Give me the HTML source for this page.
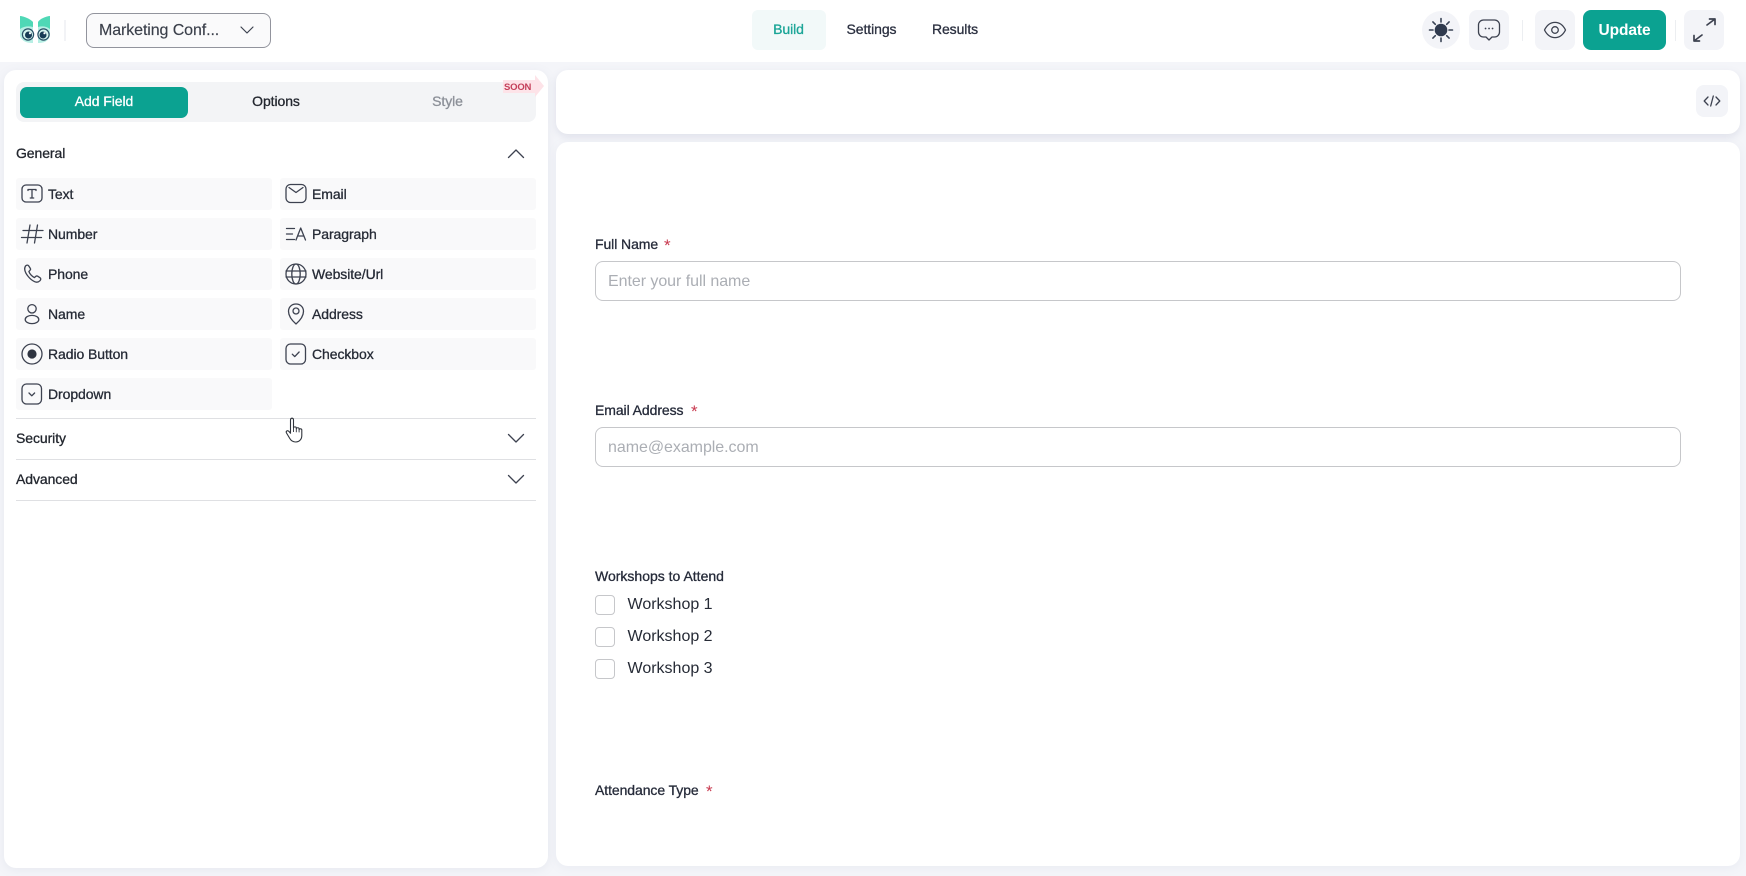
<!DOCTYPE html>
<html lang="en">
<head>
<meta charset="utf-8">
<title>Form Builder</title>
<style>
*{box-sizing:border-box;margin:0;padding:0}
html,body{width:1746px;height:876px;overflow:hidden;background:#f4f5f9;font-family:"Liberation Sans",Arial,sans-serif;color:#262b36}
.a{position:absolute}
.t{position:absolute;white-space:nowrap;line-height:20px;height:20px;font-size:14px;-webkit-text-stroke:.3px currentColor;letter-spacing:-.08px}
.c{transform:translateX(-50%)}
.btn{position:absolute;background:#f3f4f8;border-radius:8px}
.row{position:absolute;height:32px;background:#f9f9fa;border-radius:3px;width:256px}
.div{position:absolute;left:15.5px;width:520px;height:1px;background:#dfe0e3}
.input{position:absolute;left:595px;width:1086px;height:40px;border:1.5px solid #c6c7ca;border-radius:8px;background:#fff}
.ph{position:absolute;font-size:16px;line-height:20px;color:#abaeb4;white-space:nowrap;letter-spacing:-.05px}
.cb{position:absolute;left:595px;width:20px;height:20px;border:1.3px solid #c6c7ca;border-radius:4px;background:#fff}
.wl{position:absolute;left:627.5px;font-size:16px;line-height:20px;color:#262b36;white-space:nowrap}
.star{position:absolute;color:#c8384e;font-size:17px;line-height:20px}
svg{position:absolute;overflow:visible;fill:none}
.i{stroke:#3d4250;stroke-width:1.3;stroke-linecap:round;stroke-linejoin:round}
</style>
</head>
<body>
<!-- header -->
<div class="a" style="left:0;top:0;width:1746px;height:62px;background:#fff"></div>

<svg style="left:0;top:0" width="70" height="60" viewBox="0 0 70 60">
  <path d="M20 16c5 .5 10 3 13 6v21c-5 0-11-1-13-7z" fill="#b7efe4"/>
  <path d="M50 16c-5 .5-10 3-12 6v21c5 0 10-1 12-7z" fill="#b7efe4"/>
  <path d="M20 16c5 .5 10 3 13 6v5c-4-1-9-1-13 2z" fill="#4fd8b6"/>
  <path d="M50 16c-5 .5-10 3-12 6v5c4-1 8-1 12 2z" fill="#4fd8b6"/>
  <circle cx="28" cy="34.5" r="5.6" fill="#d6f6ef" stroke="#2a5066" stroke-width="1.2"/>
  <circle cx="28.5" cy="35" r="3.5" fill="#173b55"/>
  <circle cx="30" cy="33.2" r="1.1" fill="#fff"/>
  <circle cx="43.5" cy="34.5" r="5.6" fill="#d6f6ef" stroke="#2a5066" stroke-width="1.2"/>
  <circle cx="43" cy="35" r="3.5" fill="#173b55"/>
  <circle cx="44.5" cy="33.2" r="1.1" fill="#fff"/>
  <path d="M65 20v21" stroke="#eceef1" stroke-width="1.4"/>
</svg>

<div class="a" style="left:86px;top:12.5px;width:185px;height:35px;border:1.2px solid #92949d;border-radius:8px;background:#fafafb"></div>
<div class="a" style="left:99px;top:20.5px;font-size:16px;line-height:20px;color:#3a3f4a;white-space:nowrap;letter-spacing:-.1px;-webkit-text-stroke:.15px currentColor">Marketing Conf...</div>
<svg style="left:240px;top:25px" width="14" height="10"><path d="M1 2l6 6 6-6" stroke="#3d4250" stroke-width="1.2" stroke-linecap="round" stroke-linejoin="round"/></svg>

<div class="a" style="left:752px;top:10px;width:74px;height:40px;background:#f2f9f9;border-radius:6px"></div>
<div class="t c" style="left:788.5px;top:19px;color:#1aa597">Build</div>
<div class="t c" style="left:871.5px;top:19px;color:#2b3040">Settings</div>
<div class="t c" style="left:955px;top:19px;color:#2b3040">Results</div>

<!-- sun -->
<div class="a" style="left:1422px;top:11px;width:38px;height:38px;border-radius:50%;background:#f3f4f8"></div>
<svg style="left:1421px;top:10px" width="40" height="40" viewBox="0 0 40 40">
  <circle cx="20" cy="20" r="6.3" fill="#2f3a4e"/>
  <path d="M20 8.5v3.5M20 28v3.5M8.5 20h3.5M28 20h3.5M11.9 11.900l2.400 2.400M25.700 25.700l2.400 2.400M28.100 11.900l-2.400 2.400M14.300 25.700l-2.400 2.400" stroke="#3a4456" stroke-width="1.6" stroke-linecap="round"/>
</svg>
<!-- chat -->
<div class="btn" style="left:1469px;top:10px;width:40px;height:40px"></div>
<svg style="left:1469px;top:10px" width="40" height="40" viewBox="0 0 40 40">
  <path d="M14.500 10h11a5 5 0 0 1 5 5v7a5 5 0 0 1-5 5h-2.500l-3 3-3-3h-2.500a5 5 0 0 1-5-5v-7a5 5 0 0 1 5-5z" class="i" stroke-width="1.500"/>
  <path d="M16.500 18.500h.1M20 18.500h.1M23.500 18.500h.1" stroke="#3d4250" stroke-width="1.7" stroke-linecap="round"/>
</svg>
<div class="a" style="left:1521.5px;top:20px;width:1.4px;height:21px;background:#eceef1"></div>
<!-- eye -->
<div class="btn" style="left:1535px;top:10px;width:40px;height:40px"></div>
<svg style="left:1535px;top:10px" width="40" height="40" viewBox="0 0 40 40">
  <path d="M9.500 20c2.500-5 6.200-7.600 10.500-7.600S28 15 30.500 20c-2.500 5-6.200 7.600-10.500 7.600S12 25 9.500 20z" class="i" stroke-width="1.500"/>
  <circle cx="20" cy="20" r="3.300" class="i" stroke-width="1.500"/>
</svg>
<!-- update -->
<div class="a" style="left:1583px;top:10px;width:83px;height:40px;background:#0ba291;border-radius:8px"></div>
<div class="a c" style="left:1624.5px;top:21px;font-size:15.5px;line-height:20px;color:#fff;font-weight:700;white-space:nowrap;letter-spacing:-.1px">Update</div>
<div class="a" style="left:1674.5px;top:20px;width:1.4px;height:21px;background:#eceef1"></div>
<!-- expand -->
<div class="btn" style="left:1684px;top:10px;width:40px;height:40px"></div>
<svg style="left:1684px;top:10px" width="40" height="40" viewBox="0 0 40 40">
  <path d="M23 15l8-6M25.500 9H31v5.500M18 25l-8 6M10 25.500V31h5.500" stroke="#3d4250" stroke-width="1.700" stroke-linecap="round" stroke-linejoin="round"/>
</svg>

<!-- left panel -->
<div class="a" style="left:4px;top:70px;width:543.5px;height:798px;background:#fff;border-radius:12px;box-shadow:0 2px 10px rgba(120,125,160,.10)"></div>
<div class="a" style="left:15.5px;top:82px;width:520px;height:39.5px;background:#f3f4f6;border-radius:8px"></div>
<div class="a" style="left:20px;top:86.5px;width:168px;height:31px;background:#0ba291;border-radius:7px"></div>
<div class="t c" style="left:104px;top:91px;color:#fff">Add Field</div>
<div class="t c" style="left:276px;top:91px;color:#23272f">Options</div>
<div class="t c" style="left:447.5px;top:91px;color:#8c9098">Style</div>
<svg style="left:503px;top:75px" width="40" height="22" viewBox="0 0 40 22"><path d="M0 5h32V0l9 11-9 11v-4H0z" fill="#fde3e8"/></svg>
<div class="a" style="left:504px;top:80.500px;font-size:9.5px;line-height:13px;font-weight:700;color:#c4405a;white-space:nowrap;letter-spacing:-.2px">SOON</div>

<div class="t" style="left:16px;top:143px;color:#23272f">General</div>
<svg style="left:507px;top:148px" width="18" height="11"><path d="M1.500 9.500L9 2l7.500 7.500" stroke="#3d4250" stroke-width="1.300" stroke-linecap="round" stroke-linejoin="round"/></svg>

<div class="row" style="left:15.5px;top:178px"></div><div class="row" style="left:280px;top:178px"></div>
<div class="row" style="left:15.5px;top:218px"></div><div class="row" style="left:280px;top:218px"></div>
<div class="row" style="left:15.5px;top:258px"></div><div class="row" style="left:280px;top:258px"></div>
<div class="row" style="left:15.5px;top:298px"></div><div class="row" style="left:280px;top:298px"></div>
<div class="row" style="left:15.5px;top:338px"></div><div class="row" style="left:280px;top:338px"></div>
<div class="row" style="left:15.5px;top:378px"></div>

<div class="t" style="left:48px;top:184px">Text</div>
<div class="t" style="left:48px;top:224px">Number</div>
<div class="t" style="left:48px;top:264px">Phone</div>
<div class="t" style="left:48px;top:304px">Name</div>
<div class="t" style="left:48px;top:344px">Radio Button</div>
<div class="t" style="left:48px;top:384px">Dropdown</div>
<div class="t" style="left:312px;top:184px">Email</div>
<div class="t" style="left:312px;top:224px">Paragraph</div>
<div class="t" style="left:312px;top:264px">Website/Url</div>
<div class="t" style="left:312px;top:304px">Address</div>
<div class="t" style="left:312px;top:344px">Checkbox</div>

<!-- left icons -->
<svg style="left:20px;top:178px" width="26" height="32" viewBox="0 0 26 32">
  <rect x="2" y="7" width="20" height="17" rx="4" class="i" stroke-width="1.400"/>
  <path d="M8 12.500v-1h8v1M12 11.500v8.500M10.300 20h3.400" class="i" stroke-width="1.200"/>
</svg>
<svg style="left:20px;top:218px" width="26" height="32" viewBox="0 0 26 32">
  <path d="M10 7L7 25M17.500 7l-3 18M3 12.500h20M1.500 19.500h20" class="i" stroke-width="1.200"/>
</svg>
<svg style="left:20px;top:258px" width="26" height="32" viewBox="0 0 26 32">
  <path d="M5.500 8c1.200-1.100 2.500-1.200 3.200-.1l1.600 2.500c.5.700.3 1.400-.4 2l-1 1c.7 2.400 3 5.100 5.600 6.200l1.100-1.100c.6-.6 1.400-.7 2.100-.3l2.400 1.600c.9.600.9 1.800-.1 2.900-1.500 1.500-3.500 1.900-5.600.9C10 21.500 5.500 16 4.800 12c-.3-1.500.1-3 .7-4z" class="i" stroke-width="1.300"/>
</svg>
<svg style="left:20px;top:298px" width="26" height="32" viewBox="0 0 26 32">
  <circle cx="12" cy="10.800" r="4.200" class="i" stroke-width="1.400"/>
  <ellipse cx="12" cy="21.500" rx="6.800" ry="4.100" class="i" stroke-width="1.400"/>
</svg>
<svg style="left:20px;top:338px" width="26" height="32" viewBox="0 0 26 32">
  <circle cx="12" cy="16" r="10" class="i" stroke-width="1.400"/>
  <circle cx="12" cy="16" r="4.600" fill="#2f3440"/>
</svg>
<svg style="left:20px;top:378px" width="26" height="32" viewBox="0 0 26 32">
  <rect x="2" y="6" width="19.500" height="20" rx="4.500" class="i" stroke-width="1.400"/>
  <path d="M9 15l2.800 2.800L14.600 15" class="i" stroke-width="1.300"/>
</svg>

<!-- right icons -->
<svg style="left:284px;top:178px" width="26" height="32" viewBox="0 0 26 32">
  <rect x="2" y="6.500" width="20" height="18" rx="4.500" class="i" stroke-width="1.400"/>
  <path d="M5 9.500l7 5 7-5" class="i" stroke-width="1.300"/>
</svg>
<svg style="left:284px;top:218px" width="26" height="32" viewBox="0 0 26 32">
  <path d="M2.500 10.500h8M2.500 16h6M2.500 21.500h8M12 22l4.700-12 4.800 12M13.600 18h6.200" class="i" stroke-width="1.200"/>
</svg>
<svg style="left:284px;top:258px" width="26" height="32" viewBox="0 0 26 32">
  <circle cx="12" cy="16" r="10" class="i" stroke-width="1.400"/>
  <ellipse cx="12" cy="16" rx="4.200" ry="10" class="i" stroke-width="1.300"/>
  <path d="M2 13h20M2 19h20" class="i" stroke-width="1.300"/>
</svg>
<svg style="left:284px;top:298px" width="26" height="32" viewBox="0 0 26 32">
  <path d="M12 6c4.200 0 7.500 3 7.500 7.300 0 5-3.800 9.500-7.500 12.700-3.700-3.200-7.500-7.700-7.500-12.700C4.500 9 7.800 6 12 6z" class="i" stroke-width="1.400"/>
  <circle cx="12" cy="13" r="3" class="i" stroke-width="1.400"/>
</svg>
<svg style="left:284px;top:338px" width="26" height="32" viewBox="0 0 26 32">
  <rect x="2" y="6" width="19.500" height="20" rx="4.500" class="i" stroke-width="1.400"/>
  <path d="M8.300 16.200l2.500 2.400 4.300-4.600" class="i" stroke-width="1.300"/>
</svg>

<div class="div" style="top:418px"></div>
<div class="t" style="left:16px;top:428px;color:#23272f">Security</div>
<svg style="left:507px;top:433px" width="18" height="11"><path d="M1.500 1.500L9 9l7.500-7.500" stroke="#3d4250" stroke-width="1.300" stroke-linecap="round" stroke-linejoin="round"/></svg>
<div class="div" style="top:459px"></div>
<div class="t" style="left:16px;top:469px;color:#23272f">Advanced</div>
<svg style="left:507px;top:474px" width="18" height="11"><path d="M1.500 1.500L9 9l7.500-7.500" stroke="#3d4250" stroke-width="1.300" stroke-linecap="round" stroke-linejoin="round"/></svg>
<div class="div" style="top:500px"></div>

<!-- top card -->
<div class="a" style="left:556px;top:70px;width:1184px;height:64px;background:#fff;border-radius:12px;box-shadow:0 3px 8px rgba(120,125,160,.16)"></div>
<div class="btn" style="left:1696px;top:85px;width:32px;height:32px"></div>
<svg style="left:1696px;top:85px" width="32" height="32" viewBox="0 0 32 32">
  <path d="M12 12l-3.800 4 3.800 4M20 12l3.800 4-3.800 4M17.300 11l-2.600 10" class="i" stroke-width="1.200"/>
</svg>

<!-- main card -->
<div class="a" style="left:556px;top:142px;width:1184px;height:724px;background:#fff;border-radius:12px;box-shadow:0 2px 10px rgba(120,125,160,.08)"></div>

<div class="t" style="left:595px;top:234px;color:#262b3a">Full Name</div>
<div class="star" style="left:664px;top:236px">*</div>
<div class="input" style="top:261px"></div>
<div class="ph" style="left:608px;top:272px">Enter your full name</div>

<div class="t" style="left:595px;top:400px;color:#262b3a">Email Address</div>
<div class="star" style="left:691px;top:402px">*</div>
<div class="input" style="top:427px"></div>
<div class="ph" style="left:608px;top:438px">name@example.com</div>

<div class="t" style="left:595px;top:566px;color:#262b3a;letter-spacing:0">Workshops to Attend</div>
<div class="cb" style="top:595px"></div><div class="wl" style="top:595px">Workshop 1</div>
<div class="cb" style="top:627px"></div><div class="wl" style="top:627px">Workshop 2</div>
<div class="cb" style="top:659px"></div><div class="wl" style="top:659px">Workshop 3</div>

<div class="t" style="left:595px;top:780px;color:#262b3a">Attendance Type</div>
<div class="star" style="left:706px;top:782px">*</div>

<!-- cursor -->
<svg style="left:285px;top:416px" width="22" height="28" viewBox="0 0 22 28">
  <path d="M5.500 4c0-2.400 3-2.400 3 0v8c0-1.500 2.800-1.500 2.800 0v.8c0-1.400 2.800-1.400 2.800 0v1c0-1.300 2.700-1.300 2.700.2v5.500c0 3.800-2.500 6.500-6 6.500-3.200 0-4.800-1.400-6-3.500L1.500 17c-1-1.800 1-3 2.300-1.700l1.700 1.900z" fill="#fff" stroke="#30343c" stroke-width="1.100" stroke-linejoin="round"/>
  <path d="M8.500 12v4M11.300 12.800v3.400M14.100 13.800v2.600" stroke="#30343c" stroke-width=".9"/>
</svg>
</body>
</html>
